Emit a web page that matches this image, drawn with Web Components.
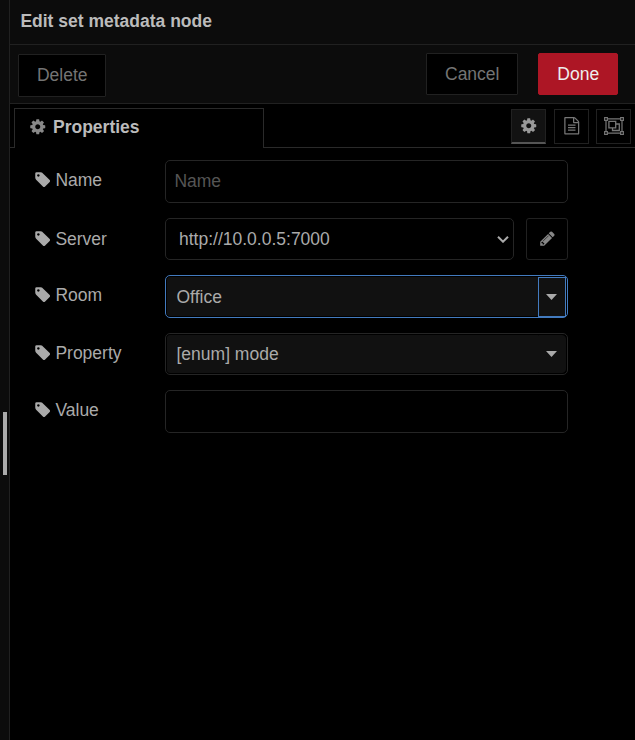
<!DOCTYPE html>
<html lang="en">
<head>
<meta charset="utf-8">
<title>Edit set metadata node</title>
<style>
html,body{margin:0;height:100%;background:#000;overflow:hidden}
body{font:17.5px/24px "Liberation Sans",Arial,sans-serif;color:#aaa}
</style>
</head>
<body>
<edit-tray>
  <span slot="title">Edit set metadata node</span>
  <tray-button slot="left" style="--h:43px;--w:88px;--pb:2px">Delete</tray-button>
  <tray-button slot="right" style="--w:92px">Cancel</tray-button>
  <tray-button slot="right" primary style="--w:80px">Done</tray-button>
  <tab-bar slot="tabs">Properties</tab-bar>
  <form-row label="Name" style="--dy:-1px"><text-field placeholder="Name"></text-field></form-row>
  <form-row label="Server" style="--h:42px;--gap:15px"><select-field>http://10.0.0.5:7000</select-field><icon-button icon="pencil" style="--w:42px;--h:42px;--r:3px;--size:17px;--c:#878787;--pb:2px"></icon-button></form-row>
  <form-row label="Room" style="--gap:15px;--dy:-1px"><typed-field focused>Office</typed-field></form-row>
  <form-row label="Property" style="--h:42px;--gap:15px;--dy:-1px"><typed-field>[enum] mode</typed-field></form-row>
  <form-row label="Value" style="--gap:15px;--dy:-1px"><text-field></text-field></form-row>
</edit-tray>
<script>
const define = (name, html, init) => customElements.define(name, class extends HTMLElement {
  constructor() {
    super();
    const t = document.createElement('template');
    t.innerHTML = '<style>*{box-sizing:border-box}:host{box-sizing:border-box}</style>' + html;
    this.attachShadow({mode: 'open'}).append(t.content.cloneNode(true));
    if (init) init(this, this.shadowRoot);
  }
});

const glyphs = {
  gear: 'M1152 896q0-106-75-181t-181-75-181 75-75 181 75 181 181 75 181-75 75-181zm512-109v222q0 12-8 23t-20 13l-185 28q-19 54-39 91 35 50 107 138 10 12 10 25t-9 23q-27 37-99 108t-94 71q-12 0-26-9l-138-108q-44 23-91 38-16 136-29 186-7 28-36 28h-222q-14 0-24.5-8.5t-11.5-21.5l-28-184q-49-16-90-37l-141 107q-10 9-25 9-14 0-25-11-126-114-165-168-7-10-7-23 0-12 8-23 15-21 51-66.5t54-70.5q-27-50-41-99l-183-27q-13-2-21-12.5t-8-23.5v-222q0-12 8-23t19-13l186-28q14-46 39-92-40-57-107-138-10-12-10-24 0-10 9-23 26-36 98.5-107.5t94.5-71.5q13 0 26 10l138 107q44-23 91-38 16-136 29-186 7-28 36-28h222q14 0 24.5 8.5t11.5 21.5l28 184q49 16 90 37l142-107q9-9 24-9 13 0 25 10 129 119 165 170 7 8 7 22 0 12-8 23-15 21-51 66.5t-54 70.5q26 50 41 98l183 28q13 2 21 12.5t8 23.5z',
  tag: 'M576 448q0-53-37.5-90.5t-90.5-37.5-90.5 37.5-37.5 90.5 37.5 90.5 90.5 37.5 90.5-37.5 37.5-90.5zm1067 576q0 53-37 90l-491 492q-39 37-91 37-53 0-90-37l-715-716q-38-37-64.5-101t-26.5-117v-416q0-52 38-90t90-38h416q53 0 117 26.5t102 64.5l715 714q37 39 37 91z',
  pencil: 'M491 1536l91-91-235-235-91 91v107h128v128h107zm523-928q0-22-22-22-10 0-17 7l-542 542q-7 7-7 17 0 22 22 22 10 0 17-7l542-542q7-7 7-17zm-54-192l416 416-832 832h-416v-416zm683 96q0 53-37 90l-166 166-416-416 166-165q36-38 90-38 53 0 91 38l235 234q37 39 37 91z',
  file: 'M1596 380q28 28 48 76t20 88v1152q0 40-28 68t-68 28h-1344q-40 0-68-28t-28-68v-1600q0-40 28-68t68-28h896q40 0 88 20t76 48zm-444-244v376h376q-10-29-22-41l-313-313q-12-12-41-22zm384 1528v-1024h-416q-40 0-68-28t-28-68v-416h-768v1536h1280zm-1024-864q0-14 9-23t23-9h704q14 0 23 9t9 23v64q0 14-9 23t-23 9h-704q-14 0-23-9t-9-23v-64zm736 224q14 0 23 9t9 23v64q0 14-9 23t-23 9h-704q-14 0-23-9t-9-23v-64q0-14 9-23t23-9h704zm0 256q14 0 23 9t9 23v64q0 14-9 23t-23 9h-704q-14 0-23-9t-9-23v-64q0-14 9-23t23-9h704z'
};
const group = '<svg viewBox="0 0 20 18" style="width:20px;height:18px" fill="none" stroke="currentColor"><path stroke-width="1.2" d="M3.5 1.8h13M3.5 16.2h13M2 3.5v11M18 3.5v11"/><path stroke-width="1.1" d="M.6.6h2.8v2.8H.6zM16.6.6h2.8v2.8h-2.8zM.6 14.6h2.8v2.8H.6zM16.6 14.6h2.8v2.8h-2.8z"/><path stroke-width="1.3" d="M4.9 4.4h6.8v6.4H4.9zM11.7 7h3.6v6.5H8.5v-2.7"/></svg>';

class GlyphIcon extends HTMLElement {
  static observedAttributes = ['name'];
  constructor() {
    super();
    this.attachShadow({mode: 'open'});
  }
  attributeChangedCallback(_, __, name) {
    this.shadowRoot.innerHTML = '<style>:host{display:flex;flex:none;justify-content:center;align-items:center}svg{display:block;flex:none;width:var(--size,17.5px);height:var(--size,17.5px);overflow:visible}</style>' +
      (name === 'group' ? group : `<svg viewBox="0 0 1792 1792"><path fill="currentColor" d="${glyphs[name]}"/></svg>`);
  }
}
customElements.define('glyph-icon', GlyphIcon);

define('tray-button', `<style>
:host{display:flex;align-items:center;justify-content:center;width:var(--w);height:var(--h,42px);padding-bottom:var(--pb,0);border:1px solid #212121;background:#000;color:#747474;border-radius:1px}
:host([primary]){background:#ad1625;border-color:#ad1625;color:#eee;border-radius:2px}
span{margin-left:.5px}
</style><span><slot></slot></span>`);

define('icon-button', `<style>
:host{display:flex;align-items:center;justify-content:center;flex:none;width:var(--w,35px);height:var(--h,35px);padding-bottom:var(--pb,0);border:1px solid #212121;border-radius:var(--r,0);color:var(--c,#777)}
:host([selected]){background:#121212;border-bottom:2px solid #555;color:#999}
</style><glyph-icon></glyph-icon>`, (el, root) => root.querySelector('glyph-icon').setAttribute('name', el.getAttribute('icon')));

define('tab-bar', `<style>
:host{display:flex;height:44px;padding:4px 4px 0 0;background:#000}
.pad{width:4px;border-bottom:1px solid #2a2a2a}
.tab{display:flex;align-items:center;width:250px;border:1px solid #2a2a2a;border-bottom:0;padding:0 0 4px 14px;font-weight:bold;color:#bbb}
.tab glyph-icon{width:18px;margin-right:6px;color:#888}
.rest{flex:1;display:flex;justify-content:flex-end;margin-right:-4px;padding:1px 4px 0 0;border-bottom:1px solid #2a2a2a}
icon-button:not([selected]){--pb:2px}
icon-button+icon-button{margin-left:8px}icon-button:last-child{margin-left:7px}
</style><div class="pad"></div><div class="tab"><glyph-icon name="gear"></glyph-icon><slot></slot></div>
<div class="rest"><icon-button icon="gear" selected></icon-button><icon-button icon="file"></icon-button><icon-button icon="group"></icon-button></div>`);

define('form-row', `<style>
:host{display:flex;width:533px;height:var(--h,43px);margin-top:var(--gap,0)}
.label{display:flex;width:130px;height:42px;align-items:center;color:#aaa}
.label>*{margin-top:calc(var(--dy,0px)*2)}
glyph-icon{width:16px;margin-right:4.4px}
.field{flex:1;display:flex;gap:12px}
</style><div class="label"><glyph-icon name="tag"></glyph-icon><span></span></div><div class="field"><slot></slot></div>`,
(el, root) => root.querySelector('span').textContent = el.getAttribute('label'));

define('text-field', `<style>
:host{display:flex;align-items:center;flex:1;border:1px solid #252525;border-radius:5px;padding:0 0 1px 8.4px;color:#555}
</style><span></span>`, (el, root) => root.querySelector('span').textContent = el.getAttribute('placeholder') || '');

define('select-field', `<style>
:host{display:flex;align-items:center;justify-content:space-between;flex:1;border:1px solid #252525;border-radius:5px;padding:0 4px 0 13px;color:#aaa}
svg{display:block}
</style><slot></slot><svg width="12" height="8" fill="none" stroke="#aaa" stroke-width="2"><path d="M1 1.7 6 6.7 11 1.7"/></svg>`);

define('typed-field', `<style>
:host{display:flex;align-items:stretch;flex:1;border:1px solid #252525;border-radius:5px;padding:1px;color:#aaa}
.value{flex:1;display:flex;align-items:center;background:#111;padding-left:9.5px;border-radius:3px 0 0 3px}
.drop{display:flex;align-items:center;justify-content:center;width:28px;background:#111;border:1px solid #111;border-radius:0 4px 4px 0;padding-right:2px}
:host([focused]){border:1px solid #437bbf}
:host([focused]) .drop{border-color:#437bbf;border-radius:0;margin-bottom:-1px;padding-bottom:1px}
svg{display:block}
</style><div class="value"><slot></slot></div><div class="drop"><svg width="11" height="6"><path d="M0 0h11L5.5 6z" fill="#aaa"/></svg></div>`);

define('edit-tray', `<style>
:host{display:grid;grid-template-columns:10px 1fr;height:740px}
.rail{display:flex;align-items:center;background:#0c0c0c;border-right:1px solid #212121;padding:147px 0 0 3px}
.grip{width:4px;height:63px;background:#aaa}
.header,.toolbar{background:#0c0c0c;border-bottom:1px solid #212121}
.header{height:45px;padding:9px 10.4px;font-weight:bold;color:#bbb}
.toolbar{display:flex;height:59px;padding:8px 17px 0 8px}
.left{padding-top:1px}
.right{display:flex;gap:20px;margin-left:auto}
.body{padding:12px 0 0 25px}
</style><div class="rail"><div class="grip"></div></div>
<div><div class="header"><slot name="title"></slot></div>
<div class="toolbar"><div class="left"><slot name="left"></slot></div><div class="right"><slot name="right"></slot></div></div>
<slot name="tabs"></slot><div class="body"><slot></slot></div></div>`);
</script>
</body>
</html>
